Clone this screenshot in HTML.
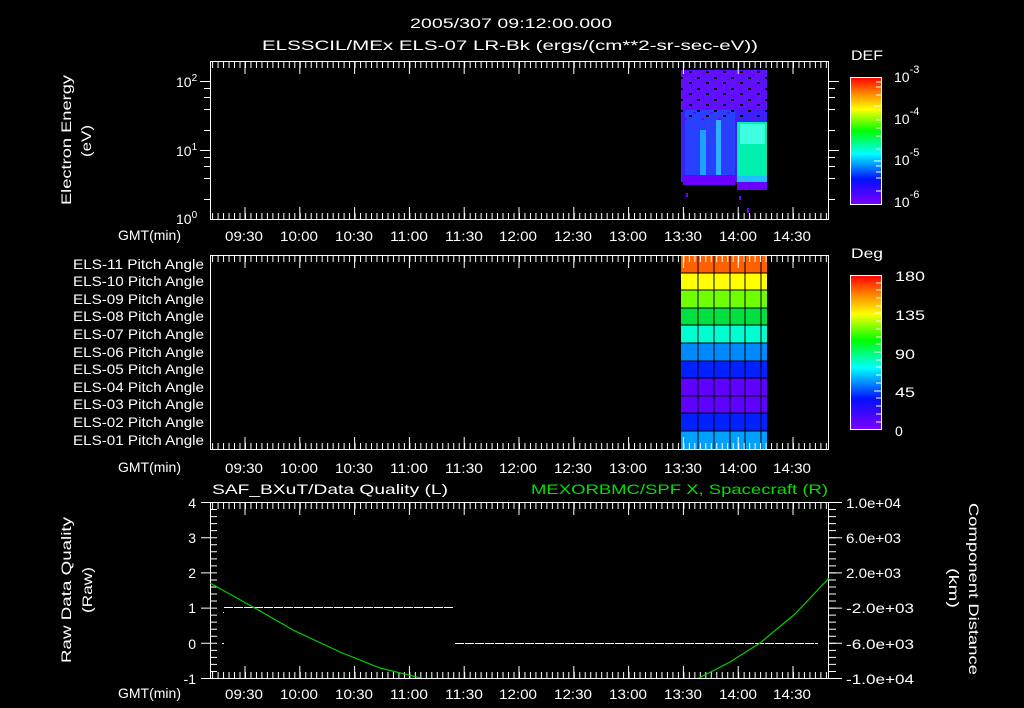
<!DOCTYPE html>
<html><head><meta charset="utf-8"><style>
html,body{margin:0;padding:0;background:#000;width:1024px;height:708px;overflow:hidden}
svg{display:block}
text{font-family:"Liberation Sans",sans-serif;fill:#fff;font-size:14px}
</style></head><body>
<svg width="1024" height="708" viewBox="0 0 1024 708" xmlns="http://www.w3.org/2000/svg">
<defs>
<linearGradient id="rb" x1="0" y1="1" x2="0" y2="0">
<stop offset="0" stop-color="#7f00ff"/><stop offset="0.2" stop-color="#0010ff"/><stop offset="0.4" stop-color="#00ffff"/>
<stop offset="0.58" stop-color="#00ff00"/><stop offset="0.75" stop-color="#ffff00"/><stop offset="0.88" stop-color="#ff8000"/><stop offset="1" stop-color="#ff0000"/>
</linearGradient>
<pattern id="noise" x="0" y="0" width="17" height="11" patternUnits="userSpaceOnUse">
<rect x="0" y="0" width="3" height="2" fill="#000"/><rect x="9" y="5" width="3" height="2" fill="#000"/><rect x="4" y="8" width="3" height="2" fill="#7000ff"/><rect x="13" y="2" width="3" height="2" fill="#5010ff"/>
</pattern>
<clipPath id="bc"><rect x="210" y="502" width="619" height="176"/></clipPath>
</defs>

<text x="410" y="28" font-size="15" textLength="202" lengthAdjust="spacingAndGlyphs">2005/307 09:12:00.000</text>
<text x="262" y="50" font-size="15" textLength="496" lengthAdjust="spacingAndGlyphs">ELSSCIL/MEx ELS-07 LR-Bk  (ergs/(cm**2-sr-sec-eV))</text>

<!-- TOP PANEL -->
<rect x="681" y="70" width="86" height="112" fill="#3a20ff"/>
<rect x="681" y="70" width="86" height="40" fill="#6010ff"/>
<rect x="685" y="110" width="50" height="72" fill="#2a40ff"/>
<rect x="700" y="130" width="6" height="50" fill="#20a0ff"/>
<rect x="716" y="120" width="5" height="60" fill="#30b0ff"/>
<rect x="681" y="70" width="86" height="50" fill="url(#noise)"/>
<rect x="737" y="122" width="30" height="60" fill="#00f0b0"/>
<rect x="740" y="124" width="25" height="20" fill="#40ffe0"/>
<rect x="737" y="176" width="30" height="6" fill="#20c0ff"/>
<rect x="683" y="175" width="52" height="10" fill="#6a00ff"/>
<rect x="737" y="182" width="30" height="8" fill="#6a00ff"/>
<rect x="686" y="193" width="2" height="4" fill="#7000ff"/><rect x="739" y="196" width="2" height="4" fill="#7000ff"/><rect x="747" y="208" width="2" height="5" fill="#7000ff"/>
<rect x="210.5" y="61.5" width="618" height="158" fill="none" stroke="#fff"/>
<g stroke="#fff">
<line x1="212.1" y1="65" x2="829" y2="65" stroke-width="6" stroke-dasharray="1 4.48"/>
<line x1="244.5" y1="68" x2="829" y2="68" stroke-width="12" stroke-dasharray="1 53.8"/>
<line x1="212.1" y1="216" x2="829" y2="216" stroke-width="6" stroke-dasharray="1 4.48"/>
<line x1="244.5" y1="213" x2="829" y2="213" stroke-width="12" stroke-dasharray="1 53.8"/>
<line x1="200" y1="81.5" x2="210" y2="81.5"/><line x1="200" y1="150.5" x2="210" y2="150.5"/>
<line x1="204" y1="88.5" x2="210" y2="88.5"/><line x1="204" y1="97.5" x2="210" y2="97.5"/><line x1="204" y1="109.5" x2="210" y2="109.5"/><line x1="204" y1="130.5" x2="210" y2="130.5"/>
<line x1="204" y1="157.5" x2="210" y2="157.5"/><line x1="204" y1="166.5" x2="210" y2="166.5"/><line x1="204" y1="178.5" x2="210" y2="178.5"/><line x1="204" y1="199.5" x2="210" y2="199.5"/>
<line x1="829" y1="81.5" x2="839" y2="81.5"/><line x1="829" y1="150.5" x2="839" y2="150.5"/>
<line x1="829" y1="88.5" x2="835" y2="88.5"/><line x1="829" y1="97.5" x2="835" y2="97.5"/><line x1="829" y1="109.5" x2="835" y2="109.5"/><line x1="829" y1="130.5" x2="835" y2="130.5"/>
<line x1="829" y1="157.5" x2="835" y2="157.5"/><line x1="829" y1="166.5" x2="835" y2="166.5"/><line x1="829" y1="178.5" x2="835" y2="178.5"/><line x1="829" y1="199.5" x2="835" y2="199.5"/>
</g>
<text x="176" y="87" font-size="14">10<tspan dy="-6" font-size="10">2</tspan></text>
<text x="176" y="156" font-size="14">10<tspan dy="-6" font-size="10">1</tspan></text>
<text x="176" y="224" font-size="14">10<tspan dy="-6" font-size="10">0</tspan></text>
<text transform="translate(71,205) rotate(-90)" font-size="15" textLength="130" lengthAdjust="spacingAndGlyphs">Electron Energy</text>
<text transform="translate(91,157) rotate(-90)" font-size="15" textLength="32" lengthAdjust="spacingAndGlyphs">(eV)</text>
<rect x="850.5" y="77.5" width="31" height="127" fill="url(#rb)" stroke="#fff"/>
<g stroke="#fff"><line x1="876" y1="82" x2="881" y2="82"/><line x1="876" y1="87" x2="881" y2="87"/><line x1="876" y1="95" x2="881" y2="95"/><line x1="874" y1="106" x2="881" y2="106"/><line x1="876" y1="120" x2="881" y2="120"/><line x1="876" y1="128" x2="881" y2="128"/><line x1="876" y1="136" x2="881" y2="136"/><line x1="876" y1="149" x2="881" y2="149"/><line x1="874" y1="161" x2="881" y2="161"/><line x1="876" y1="166" x2="881" y2="166"/><line x1="876" y1="172" x2="881" y2="172"/><line x1="876" y1="178" x2="881" y2="178"/><line x1="876" y1="191" x2="881" y2="191"/></g>
<text x="851" y="60" font-size="16" textLength="32" lengthAdjust="spacingAndGlyphs">DEF</text>
<text x="894" y="82" font-size="17">10<tspan dy="-9" font-size="11">-3</tspan></text>
<text x="894" y="124" font-size="17">10<tspan dy="-9" font-size="11">-4</tspan></text>
<text x="894" y="165" font-size="17">10<tspan dy="-9" font-size="11">-5</tspan></text>
<text x="894" y="207" font-size="17">10<tspan dy="-9" font-size="11">-6</tspan></text>

<g font-size="14">
<text x="118" y="240" textLength="63" lengthAdjust="spacingAndGlyphs">GMT(min)</text>
<text x="225" y="241" textLength="38" lengthAdjust="spacingAndGlyphs">09:30</text><text x="280" y="241" textLength="38" lengthAdjust="spacingAndGlyphs">10:00</text><text x="335" y="241" textLength="38" lengthAdjust="spacingAndGlyphs">10:30</text><text x="390" y="241" textLength="38" lengthAdjust="spacingAndGlyphs">11:00</text><text x="445" y="241" textLength="38" lengthAdjust="spacingAndGlyphs">11:30</text><text x="499" y="241" textLength="38" lengthAdjust="spacingAndGlyphs">12:00</text><text x="554" y="241" textLength="38" lengthAdjust="spacingAndGlyphs">12:30</text><text x="609" y="241" textLength="38" lengthAdjust="spacingAndGlyphs">13:00</text><text x="664" y="241" textLength="38" lengthAdjust="spacingAndGlyphs">13:30</text><text x="719" y="241" textLength="38" lengthAdjust="spacingAndGlyphs">14:00</text><text x="773" y="241" textLength="38" lengthAdjust="spacingAndGlyphs">14:30</text>
</g>

<!-- MIDDLE PANEL -->
<rect x="681" y="255" width="86" height="18" fill="#ff6000"/>
<rect x="681" y="273" width="86" height="17" fill="#ffff00"/>
<rect x="681" y="290" width="86" height="18" fill="#70ff00"/>
<rect x="681" y="308" width="86" height="17" fill="#00e040"/>
<rect x="681" y="325" width="86" height="18" fill="#00ffd0"/>
<rect x="681" y="343" width="86" height="18" fill="#0088ff"/>
<rect x="681" y="361" width="86" height="17" fill="#0020ff"/>
<rect x="681" y="378" width="86" height="18" fill="#6000ff"/>
<rect x="681" y="396" width="86" height="17" fill="#6000ff"/>
<rect x="681" y="413" width="86" height="18" fill="#0020ff"/>
<rect x="681" y="431" width="86" height="18" fill="#00a0ff"/>
<g stroke="#000"><line x1="698" y1="255" x2="698" y2="449"/><line x1="714" y1="255" x2="714" y2="449"/><line x1="730" y1="255" x2="730" y2="449"/><line x1="745" y1="255" x2="745" y2="449"/><line x1="761" y1="255" x2="761" y2="449"/>
<line x1="681" y1="273" x2="767" y2="273"/><line x1="681" y1="290" x2="767" y2="290"/><line x1="681" y1="308" x2="767" y2="308"/><line x1="681" y1="325" x2="767" y2="325"/><line x1="681" y1="343" x2="767" y2="343"/><line x1="681" y1="361" x2="767" y2="361"/><line x1="681" y1="378" x2="767" y2="378"/><line x1="681" y1="396" x2="767" y2="396"/><line x1="681" y1="413" x2="767" y2="413"/><line x1="681" y1="431" x2="767" y2="431"/></g>
<rect x="210.5" y="255.5" width="618" height="194" fill="none" stroke="#fff"/>
<g stroke="#fff">
<line x1="212.1" y1="259" x2="829" y2="259" stroke-width="6" stroke-dasharray="1 4.48"/>
<line x1="244.5" y1="262" x2="829" y2="262" stroke-width="12" stroke-dasharray="1 53.8"/>
<line x1="212.1" y1="446" x2="829" y2="446" stroke-width="6" stroke-dasharray="1 4.48"/>
<line x1="244.5" y1="443" x2="829" y2="443" stroke-width="12" stroke-dasharray="1 53.8"/>
</g>
<g font-size="13">
<text x="73" y="269" textLength="131" lengthAdjust="spacingAndGlyphs">ELS-11 Pitch Angle</text><text x="73" y="286" textLength="131" lengthAdjust="spacingAndGlyphs">ELS-10 Pitch Angle</text><text x="73" y="304" textLength="131" lengthAdjust="spacingAndGlyphs">ELS-09 Pitch Angle</text><text x="73" y="321" textLength="131" lengthAdjust="spacingAndGlyphs">ELS-08 Pitch Angle</text><text x="73" y="339" textLength="131" lengthAdjust="spacingAndGlyphs">ELS-07 Pitch Angle</text><text x="73" y="357" textLength="131" lengthAdjust="spacingAndGlyphs">ELS-06 Pitch Angle</text><text x="73" y="374" textLength="131" lengthAdjust="spacingAndGlyphs">ELS-05 Pitch Angle</text><text x="73" y="392" textLength="131" lengthAdjust="spacingAndGlyphs">ELS-04 Pitch Angle</text><text x="73" y="409" textLength="131" lengthAdjust="spacingAndGlyphs">ELS-03 Pitch Angle</text><text x="73" y="427" textLength="131" lengthAdjust="spacingAndGlyphs">ELS-02 Pitch Angle</text><text x="73" y="445" textLength="131" lengthAdjust="spacingAndGlyphs">ELS-01 Pitch Angle</text>
</g>
<rect x="850.5" y="275.5" width="31" height="154" fill="url(#rb)" stroke="#fff"/>
<g stroke="#fff"><line x1="876" y1="283" x2="881" y2="283"/><line x1="876" y1="290" x2="881" y2="290"/><line x1="876" y1="298" x2="881" y2="298"/><line x1="876" y1="306" x2="881" y2="306"/><line x1="874" y1="313" x2="881" y2="313"/><line x1="876" y1="321" x2="881" y2="321"/><line x1="876" y1="329" x2="881" y2="329"/><line x1="876" y1="337" x2="881" y2="337"/><line x1="876" y1="344" x2="881" y2="344"/><line x1="874" y1="352" x2="881" y2="352"/><line x1="876" y1="360" x2="881" y2="360"/><line x1="876" y1="367" x2="881" y2="367"/><line x1="876" y1="375" x2="881" y2="375"/><line x1="876" y1="383" x2="881" y2="383"/><line x1="874" y1="391" x2="881" y2="391"/><line x1="876" y1="398" x2="881" y2="398"/><line x1="876" y1="406" x2="881" y2="406"/><line x1="876" y1="414" x2="881" y2="414"/><line x1="876" y1="422" x2="881" y2="422"/></g>
<text x="851" y="258" font-size="16" textLength="32" lengthAdjust="spacingAndGlyphs">Deg</text>
<g font-size="17"><text x="895" y="281" textLength="30" lengthAdjust="spacingAndGlyphs">180</text><text x="895" y="320" textLength="30" lengthAdjust="spacingAndGlyphs">135</text><text x="895" y="359" textLength="20" lengthAdjust="spacingAndGlyphs">90</text><text x="895" y="397" textLength="20" lengthAdjust="spacingAndGlyphs">45</text><text x="895" y="436">0</text></g>
<g font-size="14">
<text x="118" y="472" textLength="63" lengthAdjust="spacingAndGlyphs">GMT(min)</text>
<text x="225" y="473" textLength="38" lengthAdjust="spacingAndGlyphs">09:30</text><text x="280" y="473" textLength="38" lengthAdjust="spacingAndGlyphs">10:00</text><text x="335" y="473" textLength="38" lengthAdjust="spacingAndGlyphs">10:30</text><text x="390" y="473" textLength="38" lengthAdjust="spacingAndGlyphs">11:00</text><text x="445" y="473" textLength="38" lengthAdjust="spacingAndGlyphs">11:30</text><text x="499" y="473" textLength="38" lengthAdjust="spacingAndGlyphs">12:00</text><text x="554" y="473" textLength="38" lengthAdjust="spacingAndGlyphs">12:30</text><text x="609" y="473" textLength="38" lengthAdjust="spacingAndGlyphs">13:00</text><text x="664" y="473" textLength="38" lengthAdjust="spacingAndGlyphs">13:30</text><text x="719" y="473" textLength="38" lengthAdjust="spacingAndGlyphs">14:00</text><text x="773" y="473" textLength="38" lengthAdjust="spacingAndGlyphs">14:30</text>
</g>

<!-- BOTTOM PANEL -->
<text x="212" y="494" font-size="16" textLength="236" lengthAdjust="spacingAndGlyphs">SAF_BXuT/Data Quality (L)</text>
<text x="531" y="494" font-size="16" textLength="297" lengthAdjust="spacingAndGlyphs" style="fill:#00e000">MEXORBMC/SPF X, Spacecraft (R)</text>
<rect x="210.5" y="502.5" width="618" height="176" fill="none" stroke="#fff"/>
<g stroke="#fff">
<line x1="212.1" y1="506" x2="829" y2="506" stroke-width="6" stroke-dasharray="1 4.48"/>
<line x1="244.5" y1="509" x2="829" y2="509" stroke-width="12" stroke-dasharray="1 53.8"/>
<line x1="212.1" y1="675" x2="829" y2="675" stroke-width="6" stroke-dasharray="1 4.48"/>
<line x1="244.5" y1="672" x2="829" y2="672" stroke-width="12" stroke-dasharray="1 53.8"/>
<line x1="213.5" y1="502" x2="213.5" y2="679" stroke-width="7" stroke-dasharray="1 6.04"/>
<line x1="205.5" y1="502" x2="205.5" y2="679" stroke-width="9" stroke-dasharray="1 34.2"/>
<line x1="832.5" y1="502" x2="832.5" y2="679" stroke-width="7" stroke-dasharray="1 6.04"/>
<line x1="835.5" y1="502" x2="835.5" y2="679" stroke-width="13" stroke-dasharray="1 34.2"/>
</g>
<g font-size="15" text-anchor="end"><text x="196" y="508">4</text><text x="196" y="543">3</text><text x="196" y="578">2</text><text x="196" y="613">1</text><text x="196" y="649">0</text><text x="196" y="684">-1</text></g>
<g font-size="14"><text x="846" y="508" textLength="55" lengthAdjust="spacingAndGlyphs">1.0e+04</text><text x="846" y="543" textLength="55" lengthAdjust="spacingAndGlyphs">6.0e+03</text><text x="846" y="578" textLength="55" lengthAdjust="spacingAndGlyphs">2.0e+03</text><text x="846" y="613" textLength="68" lengthAdjust="spacingAndGlyphs">-2.0e+03</text><text x="846" y="649" textLength="68" lengthAdjust="spacingAndGlyphs">-6.0e+03</text><text x="846" y="684" textLength="68" lengthAdjust="spacingAndGlyphs">-1.0e+04</text></g>
<line x1="224" y1="607.5" x2="453" y2="607.5" stroke="#fff" stroke-dasharray="9,1"/>
<line x1="455" y1="643.5" x2="818" y2="643.5" stroke="#fff" stroke-dasharray="9,1"/>
<rect x="223" y="612" width="1" height="1" fill="#fff"/><rect x="222" y="643" width="2" height="1" fill="#fff"/>
<g clip-path="url(#bc)"><polyline fill="none" stroke="#00d000" stroke-width="1.2" points="210,583 253,607 293,630 340,652 380,668 425,679 560,700 697,679 730,662 760,643 795,614 829,578"/></g>
<text transform="translate(71,663) rotate(-90)" font-size="15" textLength="146" lengthAdjust="spacingAndGlyphs">Raw Data Quality</text>
<text transform="translate(92,613) rotate(-90)" font-size="15" textLength="46" lengthAdjust="spacingAndGlyphs">(Raw)</text>
<text transform="translate(969,503) rotate(90)" font-size="15" textLength="172" lengthAdjust="spacingAndGlyphs">Component Distance</text>
<text transform="translate(949,568) rotate(90)" font-size="15" textLength="40" lengthAdjust="spacingAndGlyphs">(km)</text>
<g font-size="14">
<text x="118" y="698" textLength="63" lengthAdjust="spacingAndGlyphs">GMT(min)</text>
<text x="225" y="699" textLength="38" lengthAdjust="spacingAndGlyphs">09:30</text><text x="280" y="699" textLength="38" lengthAdjust="spacingAndGlyphs">10:00</text><text x="335" y="699" textLength="38" lengthAdjust="spacingAndGlyphs">10:30</text><text x="390" y="699" textLength="38" lengthAdjust="spacingAndGlyphs">11:00</text><text x="445" y="699" textLength="38" lengthAdjust="spacingAndGlyphs">11:30</text><text x="499" y="699" textLength="38" lengthAdjust="spacingAndGlyphs">12:00</text><text x="554" y="699" textLength="38" lengthAdjust="spacingAndGlyphs">12:30</text><text x="609" y="699" textLength="38" lengthAdjust="spacingAndGlyphs">13:00</text><text x="664" y="699" textLength="38" lengthAdjust="spacingAndGlyphs">13:30</text><text x="719" y="699" textLength="38" lengthAdjust="spacingAndGlyphs">14:00</text><text x="773" y="699" textLength="38" lengthAdjust="spacingAndGlyphs">14:30</text>
</g>
</svg>
</body></html>
